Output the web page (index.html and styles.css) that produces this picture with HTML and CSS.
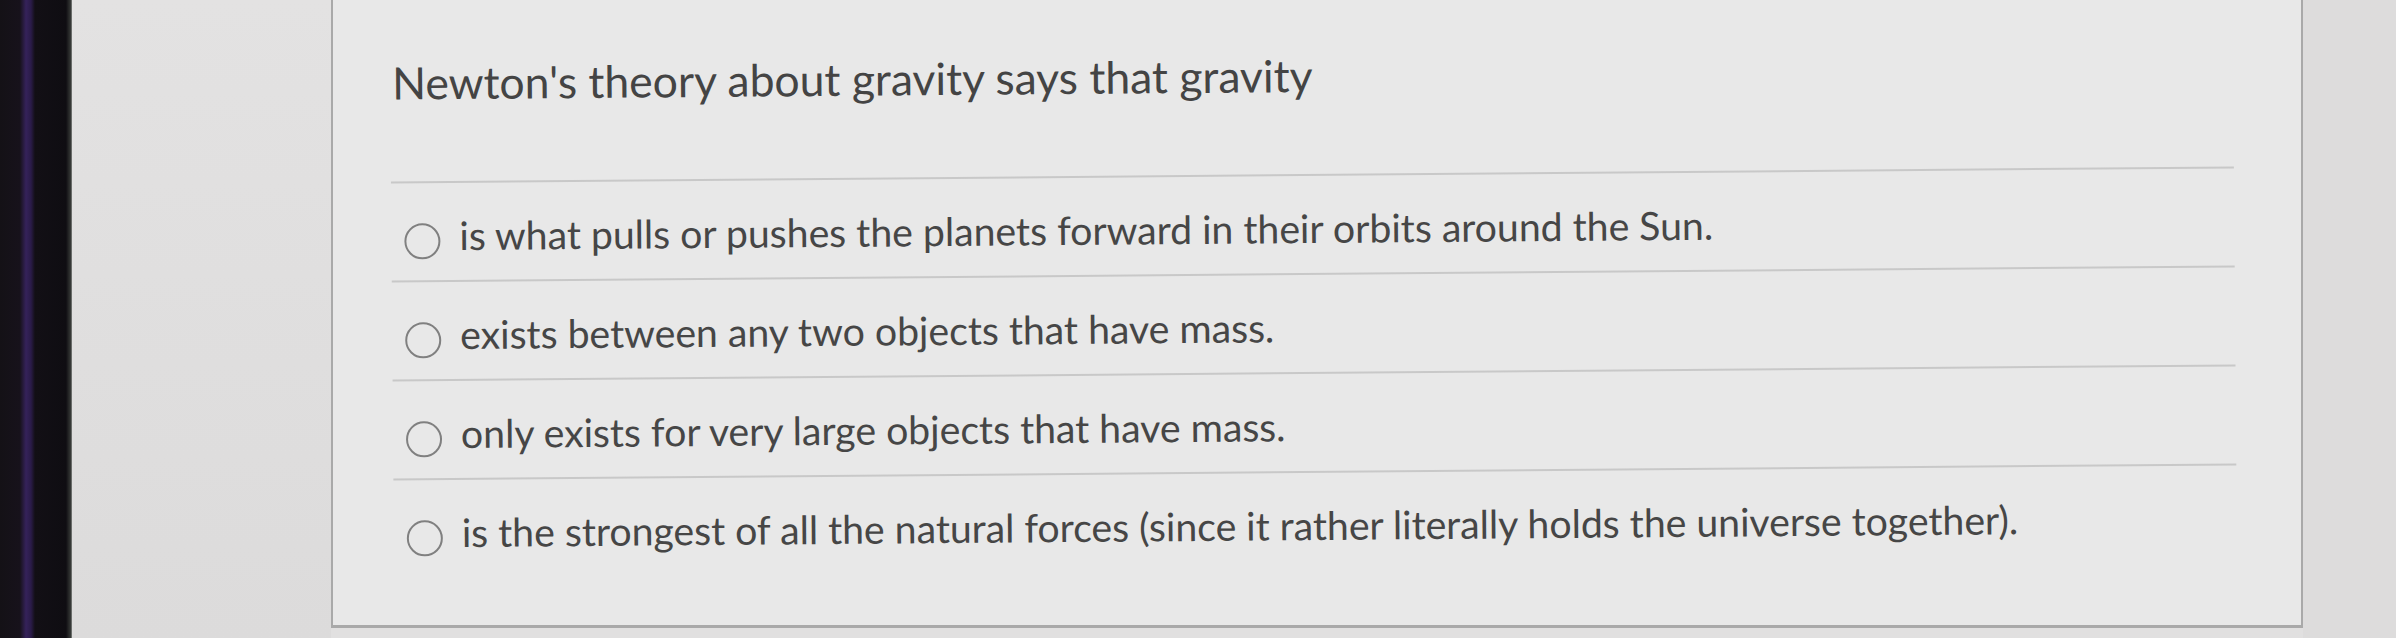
FILE: index.html
```html
<!DOCTYPE html>
<html lang="en">
<head>
<meta charset="utf-8">
<title>Quiz question</title>
<link rel="stylesheet" href="styles.css">
</head>
<body>
<div class="screen">
  <div class="bezel"></div>
  <div class="gutter-left"></div>
  <div class="card">
    <div class="card-body">
      <div class="question">Newton's theory about gravity says that gravity</div>
      <div class="answers">
        <div class="answer"><span class="radio"></span><span class="label">is what pulls or pushes the planets forward in their orbits around the Sun.</span></div>
        <div class="answer"><span class="radio"></span><span class="label">exists between any two objects that have mass.</span></div>
        <div class="answer"><span class="radio"></span><span class="label">only exists for very large objects that have mass.</span></div>
        <div class="answer"><span class="radio"></span><span class="label">is the strongest of all the natural forces (since it rather literally holds the universe together).</span></div>
      </div>
    </div>
  </div>
  <div class="gutter-right"></div>
</div>
</body>
</html>
```
FILE: styles.css
```css
html, body {
  margin: 0;
  padding: 0;
  height: 100%;
  overflow: hidden;
}
body {
  background: #e1e0e0;
  font-family: Lato, "Open Sans", sans-serif;
}
.screen {
  display: flex;
  height: 638px;
  width: 2396px;
}
.bezel {
  width: 72px;
  flex: none;
  background: linear-gradient(90deg, #141116 0px, #17121b 20px, #35225a 26px, #2a1b48 31px, #120f15 35px, #0f0d12 66px, #3a3d3a 71px, #9a9c9a 72px);
}
.gutter-left {
  width: 259px;
  flex: none;
  background: linear-gradient(180deg, #e3e2e2, #dcdbdb);
}
.card {
  width: 1972px;
  flex: none;
  height: 628px;
  box-sizing: border-box;
  background: #e8e8e8;
  border-left: 2px solid #a9a9a9;
  border-right: 2px solid #a9a9a9;
  border-bottom: 3px solid #a9a9a9;
  padding: 48px 66px 0 59px;
}
.card-body {
  transform: rotate(-0.47deg);
}
.gutter-right {
  flex: 1;
  background: #dddcdc;
}
.question {
  font-size: 44.5px;
  line-height: 1.2;
  color: #444444;
  padding-left: 2px;
  padding-bottom: 73px;
  border-bottom: 2px solid #c8c8c8;
}
.answer {
  display: flex;
  align-items: flex-start;
  padding: 28px 0 21px 13px;
  border-bottom: 2px solid #c8c8c8;
}
.answer:last-child {
  border-bottom: none;
}
.radio {
  flex: none;
  width: 32px;
  height: 32px;
  border: 2px solid #808080;
  border-radius: 50%;
  margin-top: 12px;
  margin-right: 19px;
}
.label {
  font-size: 39.2px;
  line-height: 1.2;
  color: #464646;
}
```
